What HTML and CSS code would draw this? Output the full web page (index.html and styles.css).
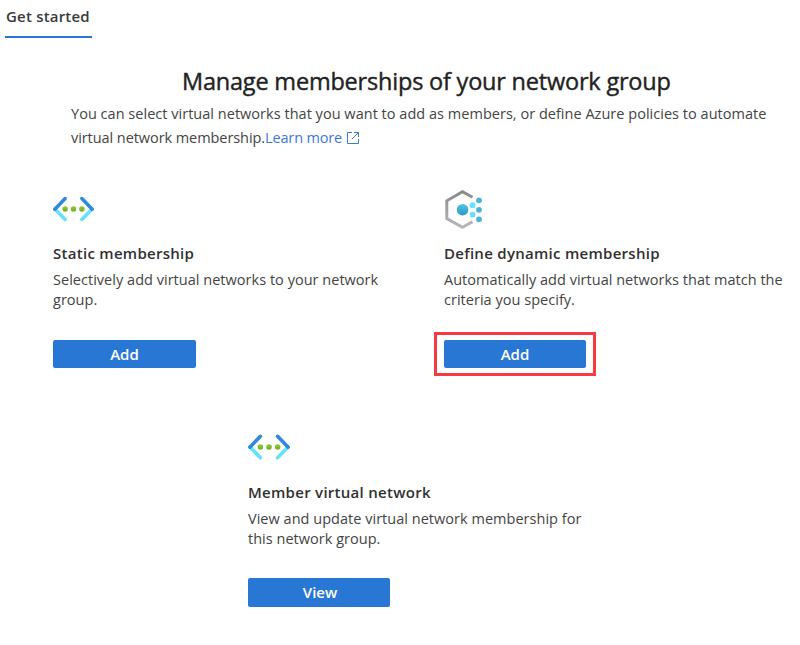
FILE: index.html
```html
<!DOCTYPE html>
<html lang="en">
<head>
<meta charset="utf-8">
<title>Get started</title>
<link rel="stylesheet" href="styles.css">
</head>
<body>
<svg class="defs" width="0" height="0" aria-hidden="true">
  <defs>
    <linearGradient id="green" x1="0" y1="0" x2="0" y2="1"><stop offset="0" stop-color="#92cc33"/><stop offset="1" stop-color="#6fac20"/></linearGradient>
    <linearGradient id="blue" x1="0" y1="0" x2="0" y2="1"><stop offset="0" stop-color="#50c5e4"/><stop offset="1" stop-color="#3096c8"/></linearGradient>
    <linearGradient id="gray" x1="0" y1="0" x2="0" y2="1"><stop offset="0" stop-color="#8a8a8a"/><stop offset="1" stop-color="#b8b8b8"/></linearGradient>
    <symbol id="vnet" viewBox="0 0 42 26">
      <g fill="none" stroke-width="3.6">
        <path d="M12.4 23.7 1.9 13M29.6 23.7 40.1 13" stroke="#62e2fc" stroke-linecap="round"/>
        <path d="M12.4 2.3 1.9 13.2M29.6 2.3 40.1 13.2" stroke="#3189dc" stroke-linecap="round"/>
      </g>
      <g fill="url(#green)"><circle cx="12.4" cy="13" r="2.8"/><circle cx="21" cy="13" r="2.8"/><circle cx="29.6" cy="13" r="2.8"/></g>
    </symbol>
  </defs>
</svg>
<nav class="tabs"><a class="tab"><span>Get started</span></a></nav>
<main>
  <header class="intro">
    <h1>Manage memberships of your network group</h1>
    <p><span class="l1">You can select virtual networks that you want to add as members, or define Azure policies to automate</span><br><span class="l2">virtual network membership.</span><a class="learn"><span>Learn more</span><svg width="12" height="12" viewBox="0 0 12 12" fill="none" stroke="#3c78d8" stroke-width="1"><path d="M5 .5H.5v11h11V7M7 .5h4.5V5M11.5.5 5 7"/></svg></a></p>
  </header>
  <div class="cards">
    <section class="card">
      <svg class="icon" width="41" height="26"><use href="#vnet"/></svg>
      <h2>Static membership</h2>
      <p>Selectively add virtual networks to your network<br>group.</p>
      <button class="wide">Add</button>
    </section>
    <section class="card">
      <svg class="icon dynamic" width="38" height="40" viewBox="0 0 38 40">
        <path d="M27.5 7.3 17.5 1.8 1.8 10.8V28.5L17.5 37.3 27.5 31.8" fill="none" stroke="url(#gray)" stroke-width="3"/>
        <circle cx="17.6" cy="19.7" r="5.8" fill="url(#blue)"/>
        <g fill="#62e2fc"><circle cx="27.6" cy="15.2" r="2.9"/><circle cx="27.6" cy="24.6" r="2.9"/></g>
        <g fill="#4ab5d8"><circle cx="34" cy="10.3" r="2.9"/><circle cx="34" cy="19.8" r="2.9"/><circle cx="34" cy="29.3" r="2.9"/></g>
      </svg>
      <h2>Define dynamic membership</h2>
      <p>Automatically add virtual networks that match the<br>criteria you specify.</p>
      <button class="marked">Add</button>
    </section>
    <section class="card member">
      <svg class="icon" width="42" height="26"><use href="#vnet"/></svg>
      <h2>Member virtual network</h2>
      <p>View and update virtual network membership for<br>this network group.</p>
      <button>View</button>
    </section>
  </div>
</main>
</body>
</html>
```
FILE: styles.css
```css
* { box-sizing: border-box; }
body { margin: 0; background: #fff; color: #444; font: 14.5px/20px "Open Sans", "Noto Sans", sans-serif; letter-spacing: 0.025px; white-space: nowrap; }
h1, h2, p { margin: 0; }
.defs { display: block; height: 0; }
.tabs { display: flex; height: 38px; padding-left: 5px; }
.tab { width: 87px; padding: 6px 0 0 1px; border-bottom: 2px solid #2876d6; color: #3a3a3a; font-size: 15px; font-weight: 600; letter-spacing: 0.2px; }
.intro { padding-left: 71px; }
h1 { margin: 26px 0 6px; padding-left: 111px; font-size: 23.5px; line-height: 34px; font-weight: 400; letter-spacing: -0.2px; color: #222; -webkit-text-stroke: 0.4px #222; }
.intro p { line-height: 24px; margin-top: -2px; }
.l2 { letter-spacing: -0.07px; }
.learn { color: #3c78d8; letter-spacing: -0.15px; }
.learn svg { margin-left: 5px; vertical-align: -1px; }
.cards { display: grid; grid-template-columns: 391px 355px; padding-left: 53px; row-gap: 60px; margin-top: 39px; }
.card { height: 179px; display: flex; flex-direction: column; align-items: flex-start; }
.icon { margin: 7px 0 26px; display: block; }
.icon.dynamic { margin: 1px 0 18px 1px; }
.member { grid-column: 1 / -1; margin-left: 195px; }
.member .icon { margin: 6px 0 27px; }
h2 { font-size: 15px; line-height: 20px; margin-top: -5px; font-weight: 600; letter-spacing: 0.28px; color: #303030; }
.card p { margin-top: 7px; }
button { position: relative; width: 142px; height: 28px; margin-top: auto; padding: 0; border: 0; border-radius: 2px; background: #2877d5; color: #fff; font: 600 15px/28px "Open Sans", "Noto Sans", sans-serif; }
.wide { width: 143px; }
.member button { height: 29px; padding-left: 2px; line-height: 27px; }
.marked::after { content: ""; position: absolute; inset: -8px -10px; border: 3px solid #f8393f; }
```
